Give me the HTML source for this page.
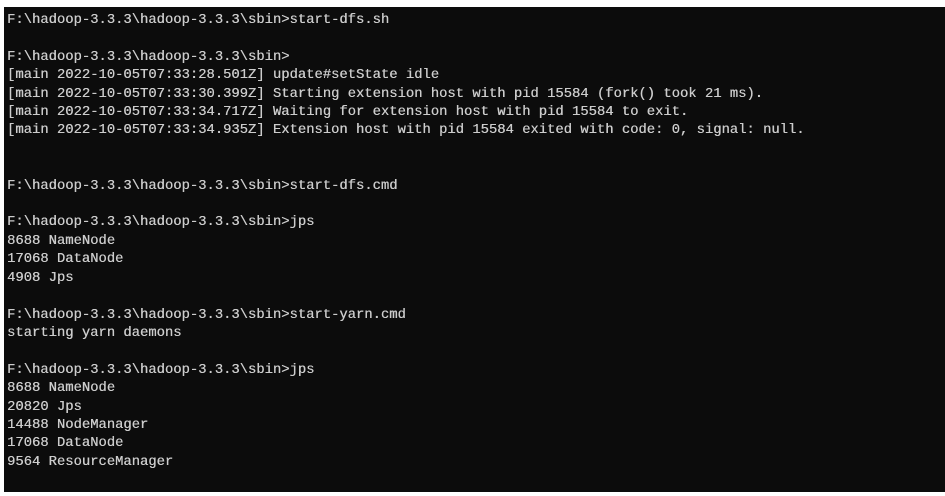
<!DOCTYPE html>
<html><head><meta charset="utf-8"><style>
html,body{margin:0;padding:0;background:#fff;width:945px;height:496px;overflow:hidden}
.t{position:absolute;left:4px;top:7px;width:941px;height:485px;background:#0c0c0c}
pre{position:absolute;left:3px;top:4px;margin:0;font-family:"Liberation Mono",monospace;font-size:13.85px;line-height:18.4px;color:#cccccc;white-space:pre;text-shadow:0.3px 0 0 #cccccc}
</style></head><body><div class="t"><pre>F:\hadoop-3.3.3\hadoop-3.3.3\sbin>start-dfs.sh

F:\hadoop-3.3.3\hadoop-3.3.3\sbin>
[main 2022-10-05T07:33:28.501Z] update#setState idle
[main 2022-10-05T07:33:30.399Z] Starting extension host with pid 15584 (fork() took 21 ms).
[main 2022-10-05T07:33:34.717Z] Waiting for extension host with pid 15584 to exit.
[main 2022-10-05T07:33:34.935Z] Extension host with pid 15584 exited with code: 0, signal: null.


F:\hadoop-3.3.3\hadoop-3.3.3\sbin>start-dfs.cmd

F:\hadoop-3.3.3\hadoop-3.3.3\sbin>jps
8688 NameNode
17068 DataNode
4908 Jps

F:\hadoop-3.3.3\hadoop-3.3.3\sbin>start-yarn.cmd
starting yarn daemons

F:\hadoop-3.3.3\hadoop-3.3.3\sbin>jps
8688 NameNode
20820 Jps
14488 NodeManager
17068 DataNode
9564 ResourceManager</pre></div></body></html>
